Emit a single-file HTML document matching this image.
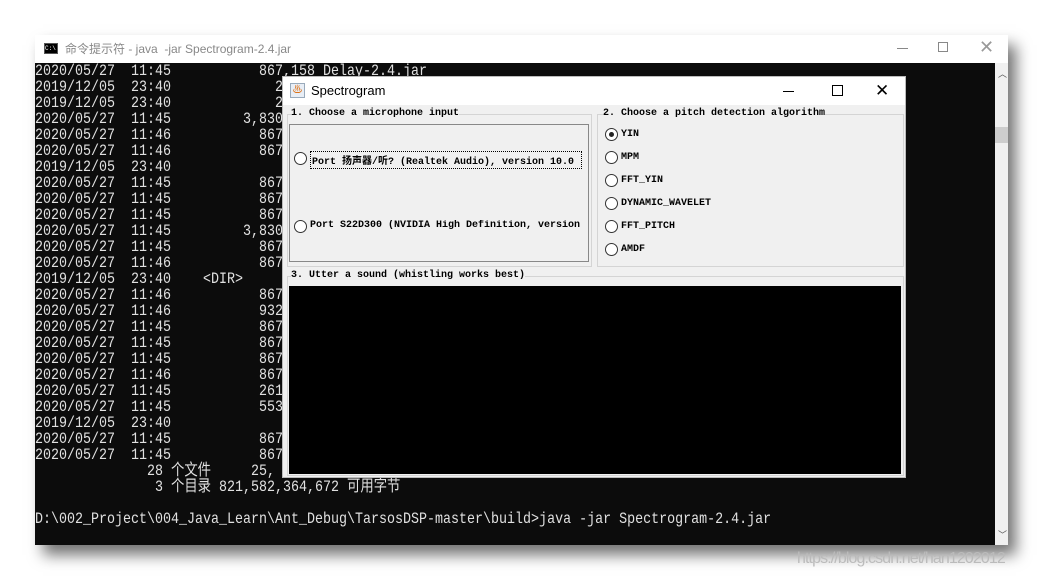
<!DOCTYPE html>
<html><head><meta charset="utf-8"><style>
*{margin:0;padding:0;box-sizing:border-box}
body{width:1043px;height:579px;background:#fff;position:relative;overflow:hidden;font-family:"Liberation Sans","Noto Sans CJK SC",sans-serif}
.cmd{position:absolute;left:35px;top:35px;width:973px;height:510px;background:#fff;box-shadow:8px 10px 14px rgba(0,0,0,.55)}
.ctitle{position:absolute;left:0;top:0;height:28px;width:973px;background:#fff;font-size:12px;color:#888;line-height:28px;padding-left:30px}
.cicon{position:absolute;left:9px;top:8px;width:14px;height:11px;background:#000;border:1px solid #555;color:#fff;font-size:6px;line-height:9px;font-family:"Liberation Mono",monospace}
.con{position:absolute;left:0;top:28px;width:960px;height:482px;background:#0c0c0c;overflow:hidden}
.sb{position:absolute;left:960px;top:28px;width:13px;height:482px;background:#f0f0f0}
pre{position:absolute;left:0;top:0;font-family:"Liberation Mono","Noto Sans CJK SC",monospace;font-size:16px;line-height:16px;color:#e0e0e0;transform:scaleX(.8333);transform-origin:0 0;white-space:pre}
.dlg{position:absolute;left:282px;top:76px;width:624px;height:402px;background:#f0f0f0;border:1px solid #bbb;z-index:5}
.dt{position:absolute;left:0;top:0;width:622px;height:28px;background:#fff;font-size:13px;line-height:28px;padding-left:28px;color:#000}
.f{font-family:"Liberation Mono","Noto Sans CJK SC",monospace;font-size:10px;color:#000;position:absolute;white-space:nowrap;font-weight:bold}
.rb{position:absolute;width:13px;height:13px;border:1px solid #333;border-radius:50%;background:#fff}
.grp{position:absolute;border:1px solid #d4d4d4}
</style></head><body>
<div class="cmd">
<div class="ctitle"><div class="cicon">C:\</div>命令提示符 - java &nbsp;-jar Spectrogram-2.4.jar</div>
<div style="position:absolute;left:862px;top:13px;width:11px;height:1px;background:#888"></div>
<div style="position:absolute;left:903px;top:7px;width:10px;height:10px;border:1px solid #888"></div>
<div style="position:absolute;left:944px;top:2px;font-size:18px;color:#999">✕</div>
<div class="con"><pre>2020/05/27  11:45           867,158 Delay-2.4.jar
2019/12/05  23:40             2
2019/12/05  23:40             2
2020/05/27  11:45         3,830
2020/05/27  11:46           867
2020/05/27  11:46           867
2019/12/05  23:40
2020/05/27  11:45           867
2020/05/27  11:45           867
2020/05/27  11:45           867
2020/05/27  11:45         3,830
2020/05/27  11:45           867
2020/05/27  11:46           867
2019/12/05  23:40    &lt;DIR&gt;
2020/05/27  11:46           867
2020/05/27  11:46           932
2020/05/27  11:45           867
2020/05/27  11:45           867
2020/05/27  11:45           867
2020/05/27  11:46           867
2020/05/27  11:45           261
2020/05/27  11:45           553
2019/12/05  23:40
2020/05/27  11:45           867
2020/05/27  11:45           867
              28 个文件     25,
               3 个目录 821,582,364,672 可用字节

D:\002_Project\004_Java_Learn\Ant_Debug\TarsosDSP-master\build&gt;java -jar Spectrogram-2.4.jar</pre></div>
<div class="sb"><div style="position:absolute;left:3px;top:4px;font-size:9px;color:#555">︿</div><div style="position:absolute;left:0;top:64px;width:13px;height:16px;background:#cdcdcd"></div><div style="position:absolute;left:3px;bottom:4px;font-size:9px;color:#555">﹀</div></div>
</div>

<div class="dlg">
<div class="dt"><div style="position:absolute;left:7px;top:6px;width:15px;height:15px;border:1px solid #9ab;background:#e8eef6;font-size:10px;line-height:13px;text-align:center;color:#d60">♨</div>Spectrogram
<div style="position:absolute;left:500px;top:14px;width:11px;height:1px;background:#000"></div>
<div style="position:absolute;left:549px;top:8px;width:11px;height:11px;border:1px solid #000"></div>
<div style="position:absolute;left:592px;top:0;font-size:17px">✕</div></div>
<div class="grp" style="left:4px;top:37px;width:305px;height:153px"></div>
<div class="f" style="left:8px;top:31px;background:#f0f0f0">1. Choose a microphone input</div>
<div style="position:absolute;left:6px;top:47px;width:300px;height:138px;border:1px solid #888"></div>
<div class="rb" style="left:11px;top:75px"></div>
<div class="f" style="left:27px;top:74px;border:1px dotted #000;padding:0 1px;width:272px;overflow:hidden">Port 扬声器/听? (Realtek Audio), version 10.0</div>
<div class="rb" style="left:11px;top:143px"></div>
<div class="f" style="left:27px;top:143px;width:271px;overflow:hidden">Port S22D300 (NVIDIA High Definition, version 1</div>
<div class="grp" style="left:314px;top:37px;width:307px;height:153px"></div>
<div class="f" style="left:320px;top:31px;background:#f0f0f0">2. Choose a pitch detection algorithm</div>
<div class="rb" style="left:322px;top:51px"></div><div style="position:absolute;left:326px;top:55px;width:5px;height:5px;border-radius:50%;background:#222"></div>
<div class="f" style="left:338px;top:52px">YIN</div>
<div class="rb" style="left:322px;top:74px"></div><div class="f" style="left:338px;top:75px">MPM</div>
<div class="rb" style="left:322px;top:97px"></div><div class="f" style="left:338px;top:98px">FFT_YIN</div>
<div class="rb" style="left:322px;top:120px"></div><div class="f" style="left:338px;top:121px">DYNAMIC_WAVELET</div>
<div class="rb" style="left:322px;top:143px"></div><div class="f" style="left:338px;top:144px">FFT_PITCH</div>
<div class="rb" style="left:322px;top:166px"></div><div class="f" style="left:338px;top:167px">AMDF</div>
<div class="grp" style="left:4px;top:199px;width:617px;height:200px"></div>
<div class="f" style="left:8px;top:193px;background:#f0f0f0">3. Utter a sound (whistling works best)</div>
<div style="position:absolute;left:6px;top:209px;width:612px;height:188px;background:#000"></div>
</div>

<div style="position:absolute;left:797px;top:550px;font-size:16px;color:#bbb;letter-spacing:-0.9px">https://blog.csdn.net/han1202012</div>
</body></html>
